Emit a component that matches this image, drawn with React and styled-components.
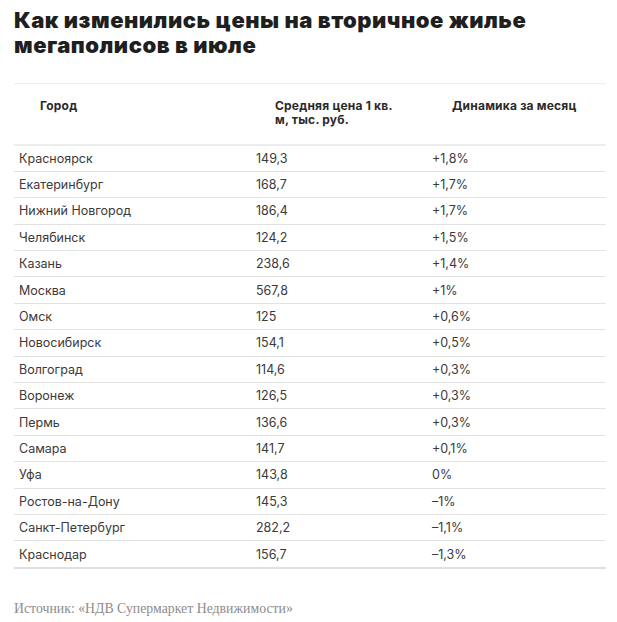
import styled, { createGlobalStyle } from "styled-components";

const GlobalStyle = createGlobalStyle`
  body {
    margin: 0;
    background: #fff;
    font-family: Inter, "Noto Sans", sans-serif;
  }
`;

const Page = styled.div`
  width: 617px;
  height: 622px;
  padding: 8px 11px 0 14px;
  box-sizing: border-box;
`;

const Title = styled.h1`
  margin: 0;
  font-size: 22px;
  line-height: 25px;
  font-weight: 900;
  letter-spacing: 0.5px;
  color: #1f1f1f;
`;

const Table = styled.table`
  width: 592px;
  margin-top: 25px;
  border-collapse: collapse;
  table-layout: fixed;
  border-top: 1px solid #ececec;
`;

const HeadCell = styled.th`
  text-align: left;
  vertical-align: top;
  padding: 15px ${(p) => p.$right || 10}px 0 ${(p) => p.$indent || 26}px;
  height: 61px;
  box-sizing: border-box;
  font-size: 12px;
  line-height: 14px;
  font-weight: 700;
  letter-spacing: 0.2px;
  color: #2a2a2a;
  border-bottom: 2px solid #ededed;
`;

const Row = styled.tr`
  border-bottom: 1px solid #e3e3e3;
  &:last-child {
    border-bottom: 2px solid #e0e0e0;
  }
`;

const Cell = styled.td`
  padding: 0 5px;
  height: 25.4px;
  font-size: 12.5px;
  line-height: 15px;
  color: #3a3a3a;
  white-space: nowrap;
`;

const Source = styled.p`
  margin: 32px 0 0;
  font-family: "Liberation Serif", serif;
  font-size: 13.8px;
  color: #8c8c8c;
`;

const rows = [
  ["Красноярск", "149,3", "+1,8%"],
  ["Екатеринбург", "168,7", "+1,7%"],
  ["Нижний Новгород", "186,4", "+1,7%"],
  ["Челябинск", "124,2", "+1,5%"],
  ["Казань", "238,6", "+1,4%"],
  ["Москва", "567,8", "+1%"],
  ["Омск", "125", "+0,6%"],
  ["Новосибирск", "154,1", "+0,5%"],
  ["Волгоград", "114,6", "+0,3%"],
  ["Воронеж", "126,5", "+0,3%"],
  ["Пермь", "136,6", "+0,3%"],
  ["Самара", "141,7", "+0,1%"],
  ["Уфа", "143,8", "0%"],
  ["Ростов-на-Дону", "145,3", "–1%"],
  ["Санкт-Петербург", "282,2", "–1,1%"],
  ["Краснодар", "156,7", "–1,3%"],
];

export default function App() {
  return (
    <>
      <GlobalStyle />
      <Page>
        <Title>
          Как изменились цены на вторичное жилье
          <br />
          мегаполисов в июле
        </Title>
        <Table>
          <colgroup>
            <col style={{ width: 237 }} />
            <col style={{ width: 176 }} />
            <col style={{ width: 179 }} />
          </colgroup>
          <thead>
            <tr>
              <HeadCell>Город</HeadCell>
              <HeadCell $indent={24} $right={26}>
                Средняя цена 1 кв. м, тыс. руб.
              </HeadCell>
              <HeadCell $indent={25}>Динамика за месяц</HeadCell>
            </tr>
          </thead>
          <tbody>
            {rows.map(([city, price, change]) => (
              <Row key={city}>
                <Cell>{city}</Cell>
                <Cell>{price}</Cell>
                <Cell>{change}</Cell>
              </Row>
            ))}
          </tbody>
        </Table>
        <Source>Источник: «НДВ Супермаркет Недвижимости»</Source>
      </Page>
    </>
  );
}
